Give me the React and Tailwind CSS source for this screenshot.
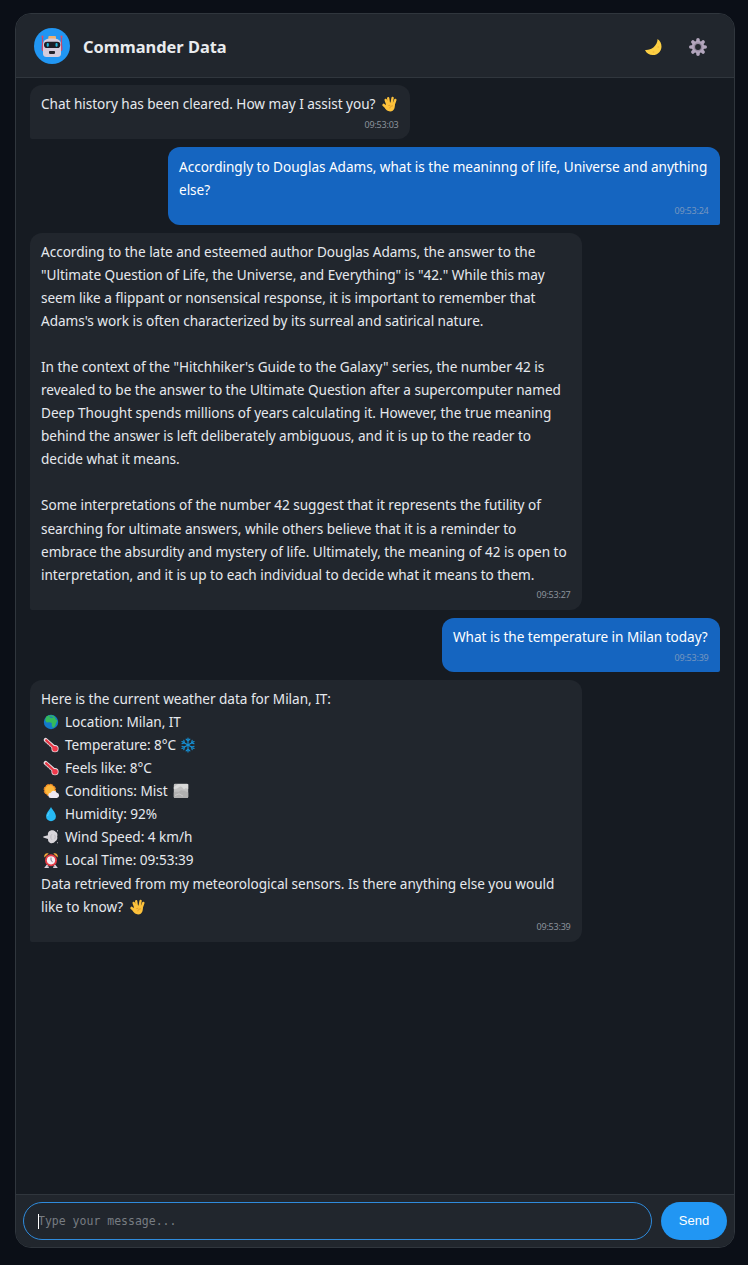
const ICON = "mr-[0.5px] inline-block h-4 w-5 align-[-3px]";

function Robot() {
  return (
    <svg viewBox="0 0 24 24" className="h-6 w-6">
      <path d="M2.500 2.500v14M21.500 2.500v14" stroke="#c9486a" strokeWidth="1.200" />
      <circle cx="2.500" cy="2.700" r="1.100" fill="#d8506c" />
      <circle cx="21.500" cy="2.700" r="1.100" fill="#d8506c" />
      <rect x="1.700" y="10.500" width="20.600" height="6.500" rx="1.500" fill="#d0486a" />
      <rect x="8.300" y="2" width="7.700" height="4" rx="1" fill="#f0b070" />
      <path d="M3 11c0-4.800 2.600-6.500 9-6.500s9 1.700 9 6.500v8.500c0 2.300-1 3.500-3.500 3.500h-11C4 23 3 21.800 3 19.500z" fill="#d5ccdc" />
      <rect x="4" y="7.700" width="16.300" height="6.300" rx="3.100" fill="#1b1c25" />
      <rect x="6.700" y="9" width="2.100" height="3.800" rx="1" fill="#20b7dc" />
      <rect x="15.500" y="9" width="2.100" height="3.800" rx="1" fill="#20b7dc" />
      <rect x="9" y="17" width="6" height="2.900" rx=".8" fill="#25232c" />
    </svg>
  );
}

function Moon() {
  return (
    <svg viewBox="0 0 18 18" className="mt-[3px] h-[18px] w-[18px]">
      <path d="M13.600 1C18 4.200 18.800 10.200 15.300 14.200 11.200 18.800 3.300 17.800 1 12c5.400.6 12.200-3.400 12.600-11Z" fill="#fccf43" />
      <circle cx="14.300" cy="9" r="1" fill="#f3bd3b" />
      <circle cx="9.500" cy="14" r="1" fill="#f3bd3b" />
    </svg>
  );
}

function Gear() {
  return (
    <svg viewBox="0 0 20 20" className="mt-[2px] h-5 w-5">
      <g stroke="#b3a6bd" strokeWidth="3.600" strokeLinecap="round">
        <path d="M10 2.800v14.400M2.800 10h14.400" />
        <path d="m4.900 4.900 10.200 10.200M15.100 4.900 4.900 15.100" />
      </g>
      <circle cx="10" cy="10" r="6.200" fill="#b3a6bd" />
      <circle cx="10" cy="10" r="4.400" fill="#95899f" />
      <circle cx="10" cy="10" r="2.900" fill="#23272e" />
    </svg>
  );
}

function Vulcan() {
  return (
    <svg viewBox="0 0 20 16" className={ICON}>
      <g stroke="#fcc13b" strokeLinecap="round" strokeWidth="2.400" fill="none">
        <path d="m6.700 4 1.800 5M9.200 2.300l.9 6.500M13.600 1.900l-1.300 7M16.300 4l-2 5.500" />
        <path d="m4.600 9 3.500 3" strokeWidth="2.600" />
      </g>
      <path d="M7.500 6.500 15.700 6.500c.6 4.700-.3 8.900-4.600 8.900-2.500 0-4-1.300-5.500-3.600z" fill="#fcc13b" />
      <path d="M14 9.800c-1.800 0-2.900.8-3.200 2.500M9.300 9.600l2-.3" stroke="#d98f24" strokeWidth=".7" fill="none" />
    </svg>
  );
}

function Globe() {
  return (
    <svg viewBox="0 0 20 16" className={ICON}>
      <circle cx="10" cy="8" r="7.200" fill="#1479c9" />
      <path d="M5.300 2.600c2.500-1.600 6-1.900 8.200-.2l1.400 3.200 1.500 1-1.300 2.500-1.200 3.400-2 1.500-1.200-2.800.1-2.300-2.200-.7-3 .2-1.500-2.100z" fill="#35b95b" />
      <path d="m8 2.300 3 .5 1.500 1.200-3-.2z" fill="#1479c9" />
    </svg>
  );
}

function Thermometer() {
  return (
    <svg viewBox="0 0 20 16" className={ICON}>
      <path d="m4.700 2.900 8.400 7.400" stroke="#e9dfe4" strokeWidth="4" strokeLinecap="round" />
      <circle cx="14" cy="11.700" r="3.600" fill="#e9dfe4" />
      <path d="m5.200 3.300 8.300 7.700" stroke="#e63946" strokeWidth="2.300" strokeLinecap="round" />
      <circle cx="14" cy="11.700" r="2.800" fill="#f0394b" />
      <path d="m4.300 6.300 1-1m1 2.800 1-1m1 2.700 1-1" stroke="#8b7883" strokeWidth=".6" />
    </svg>
  );
}

function Snowflake() {
  const arm = "M10 8V1M8.100 2.100 10 3.900l1.900-1.800";
  return (
    <svg viewBox="0 0 20 16" className="-ml-[1.5px] inline-block h-4 w-5 align-[-3px]">
      <g stroke="#1591d6" strokeWidth="1.150" fill="none" strokeLinecap="round">
        <path d={arm} />
        <path d={arm} transform="rotate(60 10 8)" />
        <path d={arm} transform="rotate(120 10 8)" />
        <path d={arm} transform="rotate(180 10 8)" />
        <path d={arm} transform="rotate(240 10 8)" />
        <path d={arm} transform="rotate(300 10 8)" />
      </g>
    </svg>
  );
}

function SunCloud() {
  return (
    <svg viewBox="0 0 20 16" className={ICON}>
      <circle cx="8.800" cy="7" r="5.700" fill="#f79228" stroke="#f79228" strokeWidth="1" strokeDasharray="3 1.400" />
      <circle cx="8.800" cy="7" r="4.700" fill="#fdb83c" />
      <path d="M10 15a2.600 2.600 0 0 1-.2-5.200 3.300 3.300 0 0 1 6-.1 2.700 2.700 0 0 1 .2 5.300z" fill="#eee8f1" />
    </svg>
  );
}

function Mist() {
  return (
    <svg viewBox="0 0 20 16" className={ICON}>
      <rect x="2.800" y=".8" width="14.400" height="14.200" rx="1.300" fill="#c0c0c0" />
      <path d="M2.800 4 7 1h10.200v5c-2-.8-2.700-1-4 .3-1.600-.5-2-3.800-4.500-2.500C7 4.600 6.200 6.200 2.800 6z" fill="#d9d9d9" />
      <path d="M2.800 9.500c2.500-1.500 4.400.3 6-1.500 1.500-1.500 3.700-.5 8.400 1.500v4.200c0 .9-.5 1.300-1.300 1.300H4.100c-.8 0-1.300-.5-1.300-1.300z" fill="#b1b1b1" />
      <path d="m4 12.500 4-1.700 4 2.300" stroke="#c9c9c9" fill="none" />
    </svg>
  );
}

function Drop() {
  return (
    <svg viewBox="0 0 20 16" className={ICON}>
      <path d="M10 1c1.600 3 4.900 6.200 4.900 9.400a4.900 4.900 0 0 1-9.800 0C5.100 7.200 8.400 4 10 1Z" fill="#26b9f4" />
      <path d="M8.200 6.300c-.8 1.200-1.500 2.400-1.500 3.700" stroke="#62d2fa" strokeWidth="1" fill="none" />
    </svg>
  );
}

function Wind() {
  return (
    <svg viewBox="0 0 20 16" className={ICON}>
      <path d="M7.500 3c1.800-2.200 5.500-2.400 7-.2 2 .7 2.300 3 1.700 4.800.6 1.800-.2 3.900-1.900 4.700-1.300 2.300-4.900 2.600-6.300.7-.9-.7-1-2-1-3L2.300 8.500v-1L7 6.300c-.3-1.300 0-2.500.5-3.300Z" fill="#d8d5da" />
      <path d="M11 5.200c-1.600 1.200-1.600 4.300 0 5.600M13.500 5.800c1 1.200 1 3.200 0 4.400" stroke="#b5b2b9" strokeWidth=".8" fill="none" />
      <path d="m16 2.200 1-.7M16.200 13.500l.8.700" stroke="#d8d5da" />
    </svg>
  );
}

function Clock() {
  return (
    <svg viewBox="0 0 20 16" className={ICON}>
      <path d="M3.300 5.400C2.600 2.400 5 .5 7.700 1.500zM16.700 5.400c.7-3-1.700-4.900-4.400-3.900z" fill="#f3a63b" />
      <path d="m6.500 13-1.700 2.200h3M13.500 13l1.700 2.200h-3" stroke="#d9d0da" strokeWidth="1.600" fill="none" />
      <circle cx="10" cy="8.300" r="6" fill="#e73b45" />
      <circle cx="10" cy="8.300" r="4.100" fill="#f5edf3" />
      <path d="M10 5.500v3l1.600 1.300" stroke="#75667a" strokeWidth=".9" fill="none" />
    </svg>
  );
}

function Message({ time, mine = false, size, timeGap = "pb-[8px]", children }) {
  return (
    <div
      className={`flex flex-col rounded-t-xl px-[11px] ${size} ${
        mine
          ? "self-end rounded-bl-xl rounded-br-[2px] bg-[#1565c0] text-white"
          : "self-start rounded-br-xl rounded-bl-[2px] bg-[#21262d] text-[#e6e9ed]"
      }`}
    >
      <div className="text-[13.6px] leading-[23.08px] tracking-[-0.03px] whitespace-pre">{children}</div>
      <div className={`mt-auto mr-[0.5px] self-end text-[9px] leading-[12px] tracking-[-0.22px] ${timeGap} ${mine ? "text-[#7596bf]" : "text-[#8b929b]"}`}>
        {time}
      </div>
    </div>
  );
}

const meaning = [
  "According to the late and esteemed author Douglas Adams, the answer to the",
  "\"Ultimate Question of Life, the Universe, and Everything\" is \"42.\" While this may",
  "seem like a flippant or nonsensical response, it is important to remember that",
  "Adams's work is often characterized by its surreal and satirical nature.",
  "",
  "In the context of the \"Hitchhiker's Guide to the Galaxy\" series, the number 42 is",
  "revealed to be the answer to the Ultimate Question after a supercomputer named",
  "Deep Thought spends millions of years calculating it. However, the true meaning",
  "behind the answer is left deliberately ambiguous, and it is up to the reader to",
  "decide what it means.",
  "",
  "Some interpretations of the number 42 suggest that it represents the futility of",
  "searching for ultimate answers, while others believe that it is a reminder to",
  "embrace the absurdity and mystery of life. Ultimately, the meaning of 42 is open to",
  "interpretation, and it is up to each individual to decide what it means to them.",
];

export default function App() {
  return (
    <div className="h-[1265px] w-[748px] bg-[#0b0f17] pt-[13px] pl-[15px] font-['Noto_Sans',sans-serif]">
      <div className="flex h-[1235px] w-[720px] flex-col overflow-hidden rounded-2xl border border-[#30363d] bg-[#161b22]">
        <header className="flex h-16 shrink-0 items-center border-b border-[#30363d] bg-[#21262d] pr-[26px] pl-[18px]">
          <div className="flex h-9 w-9 items-center justify-center rounded-full bg-[#2196f3]">
            <Robot />
          </div>
          <h1 className="mt-[3px] ml-[13px] text-[16.4px] font-bold text-[#e9ebee]">Commander Data</h1>
          <div className="ml-auto flex items-center gap-[26px]">
            <Moon />
            <Gear />
          </div>
        </header>

        <main className="flex grow flex-col gap-2 px-[14px] pt-[7px]">
          <Message time="09:53:03" size="h-[54px] w-[380px] pt-[6.8px]">
            <div>Chat history has been cleared. How may I assist you? <Vulcan /></div>
          </Message>
          <Message mine time="09:53:24" size="h-[78px] w-[552px] pt-[7.5px]">
            <div>Accordingly to Douglas Adams, what is the meaninng of life, Universe and anything</div>
            <div>else?</div>
          </Message>
          <Message time="09:53:27" size="h-[377px] w-[552px] pt-[6.6px]" timeGap="pb-[9px]">
            {meaning.map((line, i) => (
              <div key={i} className="h-[23.08px]">{line}</div>
            ))}
          </Message>
          <Message mine time="09:53:39" size="h-[54px] w-[278px] pt-[6.8px]">
            <div>What is the temperature in Milan today?</div>
          </Message>
          <Message time="09:53:39" size="h-[262px] w-[552px] pt-[6.9px]" timeGap="pb-[9px]">
            <div>Here is the current weather data for Milan, IT:</div>
            <div><Globe /> Location: Milan, IT</div>
            <div><Thermometer /> Temperature: 8°C <Snowflake /></div>
            <div><Thermometer /> Feels like: 8°C</div>
            <div><SunCloud /> Conditions: Mist <Mist /></div>
            <div><Drop /> Humidity: 92%</div>
            <div><Wind /> Wind Speed: 4 km/h</div>
            <div><Clock /> Local Time: 09:53:39</div>
            <div>Data retrieved from my meteorological sensors. Is there anything else you would</div>
            <div>like to know? <Vulcan /></div>
          </Message>
        </main>

        <footer className="flex h-[53px] shrink-0 gap-[9px] border-t border-[#30363d] bg-[#21262d] px-[7px] pt-[7px]">
          <div className="relative h-[38px] w-[629px]">
            <input
              className="h-full w-full rounded-[20px] border border-[#2f8bdc] bg-transparent pl-[14px] font-['DejaVu_Sans_Mono',monospace] text-[11.5px] text-white outline-none placeholder:text-[#777c82]"
              placeholder="Type your message..."
            />
            <span className="absolute top-[12px] left-[15px] h-[15px] w-px bg-white" />
          </div>
          <button className="h-[38px] w-[66px] rounded-[20px] bg-[#2196f3] font-['Liberation_Sans',sans-serif] text-[13px] font-medium text-white">
            Send
          </button>
        </footer>
      </div>
    </div>
  );
}
